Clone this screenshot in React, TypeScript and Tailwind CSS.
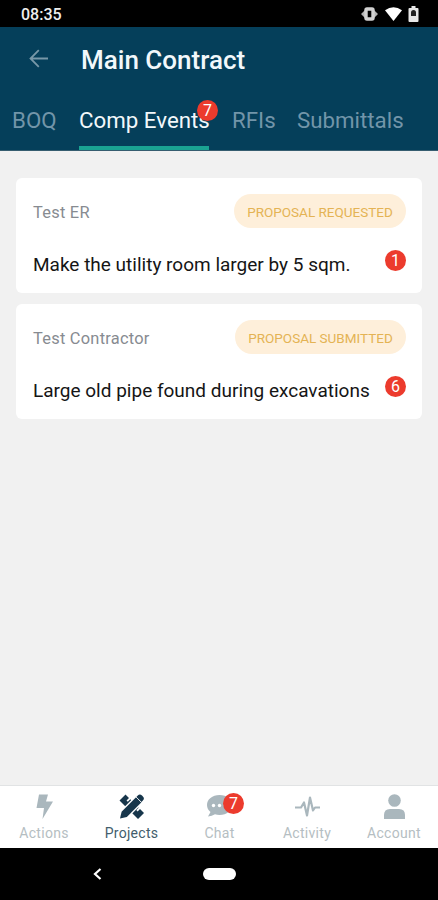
import type { ReactNode } from "react";

type Tab = { label: string; style: string; active?: boolean; count?: number };

const tabs: Tab[] = [
    { label: "BOQ", style: "w-[44px]" },
    { label: "Comp Events", style: "w-[130px]", active: true, count: 7 },
    { label: "RFIs", style: "w-[42px]" },
    { label: "Submittals", style: "w-[107px]" },
];

const events = [
    { owner: "Test ER", status: "Proposal Requested", title: "Make the utility room larger by 5 sqm.", count: 1, pill: "w-[172px]" },
    { owner: "Test Contractor", status: "Proposal Submitted", title: "Large old pipe found during excavations", count: 6, pill: "w-[171px]" },
];

function Badge({ children, className = "" }: { children: ReactNode; className?: string }) {
    return (
        <span className={`flex size-[21px] shrink-0 items-center justify-center rounded-full bg-[#ec3b2d] leading-none text-white ${className}`}>
            {children}
        </span>
    );
}

function StatusBar() {
    return (
        <div className="flex h-[27px] shrink-0 items-center justify-between bg-black pr-[19px] pl-[21px]">
            <span className="pt-[2px] text-[16px] leading-none font-medium text-[#eee]">08:35</span>
            <div className="flex items-center gap-[7px]">
                {/* Vibrate */}
                <svg className="h-[14px] w-[17px]" viewBox="0 0 17 14">
                    <path d="M0 7l5-5v10zM17 7l-5-5v10z" fill="#b4b4b4" />
                    <rect x="5" y="2" width="7" height="10" rx="1" fill="none" stroke="#d2d2d2" strokeWidth="3.400" />
                </svg>
                <svg className="h-[14px] w-[17px]" viewBox="0 0 17 14">
                    <path d="M0 3.2Q8.500-2.600 17 3.200L8.500 14z" fill="#fff" />
                </svg>
                {/* Battery with lock */}
                <svg className="ml-[-1px] h-[16px] w-[11px]" viewBox="0 0 11 16">
                    <path d="M3.500 0h4v2H9.500q1 0 1 1v12q0 1-1 1h-8q-1 0-1-1V3q0-1 1-1h2z" fill="#e8e8e8" />
                    <path d="M3 8V6.500a2.500 2.500 0 0 1 5 0V10H3z" fill="#222" />
                </svg>
            </div>
        </div>
    );
}

function Header() {
    return (
        <header className="flex h-[124px] shrink-0 flex-col border-b border-[#365d70] bg-[#053f5a]">
            <div className="flex h-[65px] items-center pl-[29px]">
                <svg className="mt-[-3px] size-[19px]" viewBox="0 0 19 19" fill="none" stroke="#7898a8" strokeWidth="1.8">
                    <path d="M19 9.500H2M9.800 1.200L1.500 9.500l8.300 8.300" />
                </svg>
                <h1 className="ml-[33px] text-[26px] leading-none font-medium whitespace-nowrap text-[#f2f8fb]">Main Contract</h1>
            </div>
            <nav className="flex flex-1 gap-[23px] pl-[12px]">
                {tabs.map((tab) => (
                    <div
                        key={tab.label}
                        className={`relative flex items-center border-b-4 pt-[3px] text-[22.3px] leading-none whitespace-nowrap ${tab.style} ${tab.active ? "border-[#1aa392] text-[#f2f8fb]" : "border-transparent text-[#7295a9]"}`}
                    >
                        {tab.label}
                        {tab.count && <Badge className="absolute top-[8px] left-[118px] text-[16px]">{tab.count}</Badge>}
                    </div>
                ))}
            </nav>
        </header>
    );
}

const navItems = [
    {
        label: "Actions",
        width: "w-[88px]",
        icon: <path d="M7 0.500h9l-2 7h7L10.500 25l1.500-11H4.500z" fill="currentColor" />,
    },
    {
        label: "Projects",
        width: "w-[87px]",
        active: true,
        icon: (
            <>
                {/* Ruler, its middle hidden by the pencil */}
                <path d="M6.500 0.500L10 4 7.500 6.500l1.300 1.300L11.300 5.300 19.700 13.700 17.300 16.100l1.300 1.300L21 15l4 4-6 6L.5 6.500z" fill="currentColor" />
                <path d="M1 24.500l1.600-6.800L17.300 3l5.200 5.200L7.800 22.900z" fill="currentColor" stroke="#fff" strokeWidth="2.800" paintOrder="stroke" />
                <path d="M18.800 1.500q2-2 4.200 0l.9.900q2 2 0 4.200l-1.400 1.400-5.100-5.100z" fill="currentColor" />
                <path d="M17 3l5.500 5.500" stroke="#fff" strokeWidth="0.800" />
            </>
        ),
    },
    {
        label: "Chat",
        width: "w-[89px]",
        count: 7,
        icon: (
            <>
                <path d="M12.500 1C5.300 1 0 5.400 0 11c0 3 1.300 5.300 3.500 7L1 22.500q4-.3 7-2.200 2 .7 4.500.7C20 21 25 16.600 25 11S20 1 12.500 1z" fill="currentColor" />
                <g fill="#fff"><circle cx="6.500" cy="11.500" r="1.700" /><circle cx="12.500" cy="11.500" r="1.700" /><circle cx="18.500" cy="11.500" r="1.700" /></g>
            </>
        ),
    },
    {
        label: "Activity",
        width: "w-[86px]",
        icon: <path d="M0 13.500h6l3-5 3 13 3-18 3 13 2-3h5" fill="none" stroke="currentColor" strokeWidth="2.200" strokeLinejoin="round" />,
    },
    {
        label: "Account",
        width: "w-[88px]",
        icon: (
            <>
                <circle cx="12.500" cy="6.500" r="6.300" fill="currentColor" />
                <path d="M2 25v-4q0-6 6-6h9q6 0 6 6v4z" fill="currentColor" />
            </>
        ),
    },
];

function BottomNav() {
    return (
        <nav className="flex h-[63px] shrink-0 border-t border-[#e1e3e4] bg-white">
            {navItems.map((item) => (
                <div key={item.label} className={`flex flex-col items-center pt-[8px] ${item.width} ${item.active ? "text-[#17364b]" : "text-[#aab7bd]"}`}>
                    <div className="relative">
                        <svg className="size-[25px]" viewBox="0 0 25 25">{item.icon}</svg>
                        {item.count && <Badge className="absolute top-[-1px] left-[16px] text-[16px]">{item.count}</Badge>}
                    </div>
                    <span className={`mt-[7px] text-[14px] leading-none tracking-[0.3px] ${item.active ? "text-[#425d6c]" : "text-[#b5bec2]"}`}>{item.label}</span>
                </div>
            ))}
        </nav>
    );
}

export default function App() {
    return (
        <div className="flex h-[900px] w-[438px] flex-col overflow-hidden bg-[#f1f1f1] font-[Roboto,sans-serif]">
            <StatusBar />
            <Header />

            <main className="flex flex-1 flex-col gap-[11px] px-[16px] pt-[27px]">
                {events.map((event) => (
                    <article key={event.title} className="flex h-[115px] flex-col rounded-[6px] bg-white pt-[16px] pr-[16px] pl-[17px]">
                        <div className="flex h-[34px] items-center justify-between">
                            <span className="pt-[4px] text-[16.4px] leading-none tracking-[0.25px] text-[#878b91]">{event.owner}</span>
                            <span className={`flex h-[34px] items-center justify-center rounded-full bg-[#feefda] pt-[3px] text-[13.5px] leading-none whitespace-nowrap text-[#e4b354] uppercase ${event.pill}`}>
                                {event.status}
                            </span>
                        </div>
                        <div className="mt-[22px] flex items-start justify-between">
                            <h2 className="mt-[5px] text-[19px] leading-none whitespace-nowrap text-[#151515]">{event.title}</h2>
                            <Badge className="text-[16px]">{event.count}</Badge>
                        </div>
                    </article>
                ))}
            </main>

            <BottomNav />

            {/* System navigation */}
            <div className="flex h-[52px] shrink-0 items-center bg-black pl-[93px]">
                <svg className="h-[12px] w-[9px]" viewBox="0 0 9 12" fill="none" stroke="#fff" strokeWidth="2.200">
                    <path d="M7.500 1L2 6l5.500 5" />
                </svg>
                <span className="ml-[101px] h-[12px] w-[33px] rounded-full bg-white" />
            </div>
        </div>
    );
}
